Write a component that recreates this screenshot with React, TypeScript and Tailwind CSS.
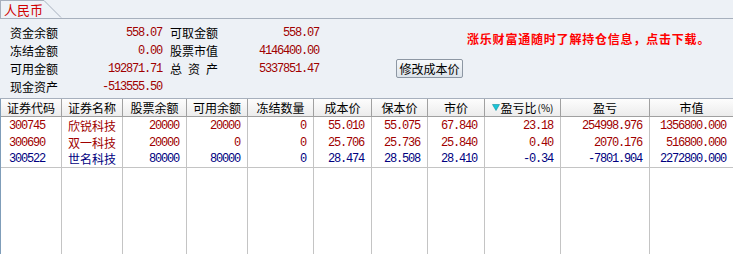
import React from "react";

const CJK = "font-['SimSun','Noto_Sans_CJK_SC',sans-serif]";
const MONO = "font-['Liberation_Mono',monospace] text-[12px] tracking-[-1.2px]";

type Row = {
  code: string;
  name: string;
  vals: string[];
  color: string;
};

const rows: Row[] = [
  {
    code: "300745",
    name: "欣锐科技",
    vals: ["20000", "20000", "0", "55.010", "55.075", "67.840", "23.18", "254998.976", "1356800.000"],
    color: "text-[#a00000]",
  },
  {
    code: "300690",
    name: "双一科技",
    vals: ["20000", "0", "0", "25.706", "25.736", "25.840", "0.40", "2070.176", "516800.000"],
    color: "text-[#a00000]",
  },
  {
    code: "300522",
    name: "世名科技",
    vals: ["80000", "80000", "0", "28.474", "28.508", "28.410", "-0.34", "-7801.904", "2272800.000"],
    color: "text-[#000080]",
  },
];

const headers = ["证券代码", "证券名称", "股票余额", "可用余额", "冻结数量", "成本价", "保本价", "市价", "盈亏比(%)", "盈亏", "市值"];

function Cell({ children, last, className = "" }: { children?: React.ReactNode; last?: boolean; className?: string }) {
  return (
    <div className={`${last ? "" : "border-r border-[#c4c4c4]"} flex items-center overflow-hidden whitespace-nowrap ${className}`}>
      {children}
    </div>
  );
}

export default function App() {
  return (
    <div className={`w-[733px] h-[254px] bg-[#edf1f6] flex flex-col ${CJK} text-[12px] text-black overflow-hidden`}>
      {/* tab bar */}
      <div className="h-[19px] flex items-end border-b border-[#a7b0bd] shrink-0">
        <div className="h-[18px] w-[44px] border-t border-l border-[#a7b0bd] bg-[#eef2f7] flex items-center pl-[3px] text-[13px] text-[#d00000] leading-none">
          人民币
        </div>
        <svg width="18" height="18" viewBox="0 0 18 18" className="block">
          <polygon points="0,0.5 1,0.5 17.5,18 0,18" fill="#eef2f7" />
          <line x1="0" y1="0.5" x2="17" y2="17.5" stroke="#a7b0bd" strokeWidth="1" />
        </svg>
      </div>

      {/* summary panel */}
      <div className="h-[80px] border-b border-[#a7b0bd] flex shrink-0 pt-[5px]">
        <div className="grid grid-cols-[50px_102px_8px_50px_99px] auto-rows-[18px] pl-[10px] items-center">
          <span>资金余额</span>
          <span className={`${MONO} text-right text-[#a00000]`}>558.07</span>
          <span />
          <span>可取金额</span>
          <span className={`${MONO} text-right text-[#a00000]`}>558.07</span>

          <span>冻结金额</span>
          <span className={`${MONO} text-right text-[#a00000]`}>0.00</span>
          <span />
          <span>股票市值</span>
          <span className={`${MONO} text-right text-[#a00000]`}>4146400.00</span>

          <span>可用金额</span>
          <span className={`${MONO} text-right text-[#a00000]`}>192871.71</span>
          <span />
          <span className="flex justify-between w-[48px]">
            <span>总</span>
            <span>资</span>
            <span>产</span>
          </span>
          <span className={`${MONO} text-right text-[#a00000]`}>5337851.47</span>

          <span>现金资产</span>
          <span className={`${MONO} text-right text-[#a00000]`}>-513555.50</span>
          <span />
          <span />
          <span />
        </div>
        <div className="ml-[77px] flex flex-col">
          <div className="mt-[8px] pl-[71px] h-[14px] flex items-center text-[12px] font-bold text-[#ff0000] tracking-[0.8px] whitespace-nowrap">
            涨乐财富通随时了解持仓信息，点击下载。
          </div>
          <button className="mt-[13px] w-[67px] h-[19px] border border-[#8d97a3] rounded-[2px] bg-gradient-to-b from-[#f7f9fb] to-[#dce3ea] text-[12px] text-black flex items-center justify-center leading-none">
            修改成本价
          </button>
        </div>
      </div>

      {/* table */}
      <div className="flex-1 bg-white border-l border-[#7f9db9] grid grid-cols-[61px_61px_64px_61px_66px_58px_56px_57px_76px_89px_83px] grid-rows-[18px_17px_17px_17px_1fr]">
        {headers.map((h, i) => (
          <div
            key={h}
            className={`${i < 10 ? "border-r border-[#a0a0a0]" : ""} border-b border-b-[#a0a0a0] bg-gradient-to-b from-[#fdfdfd] to-[#ececec] flex items-center justify-center whitespace-nowrap`}
          >
            {i === 8 ? (
              <span className="flex items-center">
                <svg width="8" height="7" viewBox="0 0 8 7" className="mr-[1px]">
                  <polygon points="0.5,0.5 7.5,0.5 4,6.5" fill="#19c6d8" stroke="#0f8fa0" strokeWidth="0.6" />
                </svg>
                <span>盈亏比</span>
                <span className="text-[10px] ml-[1px]">(%)</span>
              </span>
            ) : (
              h
            )}
          </div>
        ))}
        {rows.map((r, ri) => (
          <React.Fragment key={r.code}>
            <Cell className={`${ri === 2 ? "border-b border-b-[#c4c4c4]" : ""} pl-[8px] ${MONO} ${r.color}`}>{r.code}</Cell>
            <Cell className={`${ri === 2 ? "border-b border-b-[#c4c4c4]" : ""} pl-[6px] ${r.color}`}>{r.name}</Cell>
            {r.vals.map((v, vi) => (
              <Cell
                key={vi}
                last={vi === 8}
                className={`${ri === 2 ? "border-b border-b-[#c4c4c4]" : ""} justify-end pr-[7px] ${MONO} ${r.color}`}
              >
                {v}
              </Cell>
            ))}
          </React.Fragment>
        ))}
        {headers.map((h, i) => (
          <Cell key={"f" + h} last={i === 10} />
        ))}
      </div>
    </div>
  );
}
